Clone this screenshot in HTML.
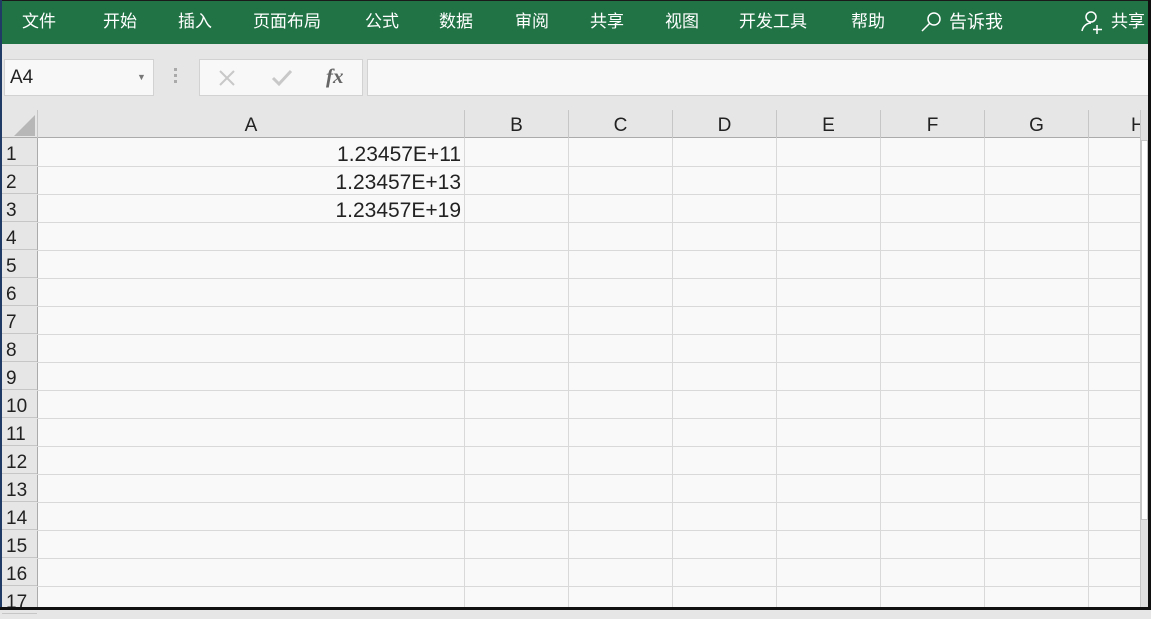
<!DOCTYPE html>
<html><head><meta charset="utf-8"><style>
*{margin:0;padding:0;box-sizing:border-box}
body{width:1151px;height:610px;overflow:hidden;background:#e6e6e6;position:relative;font-family:"Liberation Sans","Noto Sans CJK SC",sans-serif}
.a{position:absolute}
#rib{left:0;top:0;width:1151px;height:44px;background:#217346;border-top:1px solid #1a1a1a}
.t{position:absolute;top:10px;color:#fff;font-size:17px;line-height:22px;white-space:nowrap}
.box{background:#f8f8f8;border:1px solid #d2d2d2}
.ch{position:absolute;top:110px;height:28px;font-size:19px;color:#222;text-align:center;line-height:32px;border-right:1px solid #c6c6c6}
.rh{position:absolute;left:2px;width:35px;height:28px;font-size:19px;color:#222;line-height:33px;padding-left:4px;border-bottom:1px solid #c6c6c6}
.v{position:absolute;top:138px;bottom:2px;width:1px;background:#d9d9d9}
.h{position:absolute;left:37px;width:1103px;height:1px;background:#d9d9d9}
.n{position:absolute;right:690px;font-size:21px;color:#222;line-height:28px}
</style></head><body>
<div class="a" id="rib">
<span class="t" style="left:22px">文件</span>
<span class="t" style="left:103px">开始</span>
<span class="t" style="left:178px">插入</span>
<span class="t" style="left:253px">页面布局</span>
<span class="t" style="left:365px">公式</span>
<span class="t" style="left:439px">数据</span>
<span class="t" style="left:515px">审阅</span>
<span class="t" style="left:590px">共享</span>
<span class="t" style="left:665px">视图</span>
<span class="t" style="left:739px">开发工具</span>
<span class="t" style="left:851px">帮助</span>
<svg class="a" style="left:920px;top:9px" width="24" height="24" viewBox="0 0 24 24" fill="none" stroke="#fff" stroke-width="1.5"><circle cx="14" cy="9" r="6"/><line x1="9.5" y1="13.5" x2="2" y2="21"/></svg>
<span class="t" style="left:949px;font-size:18px">告诉我</span>
<svg class="a" style="left:1081px;top:9px" width="24" height="26" viewBox="0 0 24 26" fill="none" stroke="#fff" stroke-width="1.5"><circle cx="10" cy="7" r="5"/><path d="M1 21c1-5 5-8 9-8"/><line x1="16" y1="15" x2="16" y2="24"/><line x1="12" y1="19.5" x2="21" y2="19.5"/></svg>
<span class="t" style="left:1111px">共享</span>
</div>
<div class="a" style="left:0;top:0;width:2px;height:610px;background:#1f3b66"></div>
<div class="a box" style="left:4px;top:59px;width:150px;height:37px;font-size:19px;line-height:35px;padding-left:5px;color:#222">A4<span style="position:absolute;left:132px;top:0;font-size:9px;color:#777">▼</span></div>
<div class="a" style="left:174px;top:68px;width:3px;height:3px;background:#aaa;box-shadow:0 6px 0 #aaa,0 12px 0 #aaa"></div>
<div class="a box" style="left:199px;top:59px;width:164px;height:37px">
<svg class="a" style="left:18px;top:9px" width="18" height="18" viewBox="0 0 18 18" stroke="#c8c8c8" stroke-width="2"><line x1="2" y1="2" x2="16" y2="16"/><line x1="16" y1="2" x2="2" y2="16"/></svg>
<svg class="a" style="left:71px;top:9px" width="22" height="18" viewBox="0 0 22 18" fill="none" stroke="#c8c8c8" stroke-width="3"><path d="M2 9l6 6 12-13"/></svg>
<span class="a" style="left:126px;top:4px;font-family:'Liberation Serif',serif;font-style:italic;font-weight:bold;font-size:21px;color:#666">fx</span>
</div>
<div class="a box" style="left:367px;top:59px;width:790px;height:37px"></div>
<div class="a" style="left:2px;top:110px;width:1138px;height:28px;background:#e6e6e6;border-bottom:1px solid #ababab"></div>
<svg class="a" style="left:14px;top:115px" width="22" height="22"><polygon points="21,0 21,21 0,21" fill="#b7b7b7"/></svg>
<div class="ch" style="left:37px;width:428px;border-left:1px solid #c6c6c6">A</div>
<div class="ch" style="left:465px;width:104px">B</div>
<div class="ch" style="left:569px;width:104px">C</div>
<div class="ch" style="left:673px;width:104px">D</div>
<div class="ch" style="left:777px;width:104px">E</div>
<div class="ch" style="left:881px;width:104px">F</div>
<div class="ch" style="left:985px;width:104px">G</div>
<div class="ch" style="left:1089px;width:51px;text-align:left;padding-left:42px;border-right:none">H</div>
<div class="a" style="left:37px;top:138px;width:1103px;height:470px;background:#f9f9f9"></div>
<div class="v" style="left:37px;background:#ababab"></div>
<div class="v" style="left:464px"></div><div class="v" style="left:568px"></div><div class="v" style="left:672px"></div><div class="v" style="left:776px"></div><div class="v" style="left:880px"></div><div class="v" style="left:984px"></div><div class="v" style="left:1088px"></div>
<div class="h" style="top:166px"></div><div class="h" style="top:194px"></div><div class="h" style="top:222px"></div><div class="h" style="top:250px"></div><div class="h" style="top:278px"></div><div class="h" style="top:306px"></div><div class="h" style="top:334px"></div><div class="h" style="top:362px"></div><div class="h" style="top:390px"></div><div class="h" style="top:418px"></div><div class="h" style="top:446px"></div><div class="h" style="top:474px"></div><div class="h" style="top:502px"></div><div class="h" style="top:530px"></div><div class="h" style="top:558px"></div><div class="h" style="top:586px"></div>
<div class="rh" style="top:138px">1</div><div class="rh" style="top:166px">2</div><div class="rh" style="top:194px">3</div><div class="rh" style="top:222px">4</div><div class="rh" style="top:250px">5</div><div class="rh" style="top:278px">6</div><div class="rh" style="top:306px">7</div><div class="rh" style="top:334px">8</div><div class="rh" style="top:362px">9</div><div class="rh" style="top:390px">10</div><div class="rh" style="top:418px">11</div><div class="rh" style="top:446px">12</div><div class="rh" style="top:474px">13</div><div class="rh" style="top:502px">14</div><div class="rh" style="top:530px">15</div><div class="rh" style="top:558px">16</div><div class="rh" style="top:586px">17</div>
<div class="n" style="top:141px">1.23457E+11</div>
<div class="n" style="top:169px">1.23457E+13</div>
<div class="n" style="top:197px">1.23457E+19</div>
<div class="a" style="left:1140px;top:110px;width:8px;height:500px;background:#e0e0e0;border-left:1px solid #c6c6c6"></div>
<div class="a" style="left:1141px;top:140px;width:7px;height:380px;background:#fff;border:1px solid #c6c6c6"></div>
<div class="a" style="left:1148px;top:0;width:3px;height:610px;background:#111"></div>
<div class="a" style="left:0;top:607px;width:1151px;height:3px;background:#111"></div>
</body></html>
